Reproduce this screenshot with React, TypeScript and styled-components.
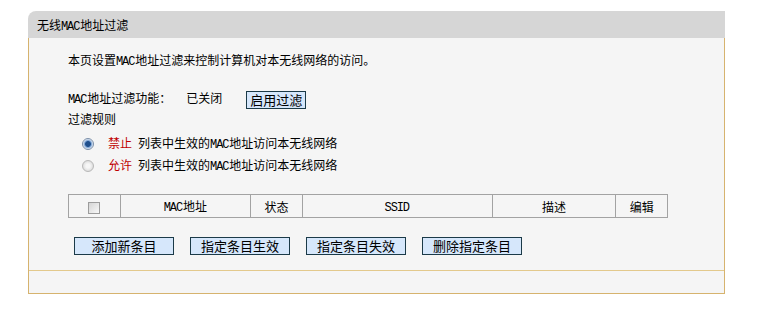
import React, { useState } from "react";
import styled, { createGlobalStyle } from "styled-components";

const GlobalStyle = createGlobalStyle`
  html, body {
    margin: 0;
    padding: 0;
    background: #ffffff;
  }
  body {
    font-family: "Noto Sans CJK SC", "Liberation Sans", sans-serif;
    font-size: 12px;
    color: #000;
  }
`;

const Page = styled.div`
  padding: 11px 0 0 28px;
  width: 697px;
`;

const Header = styled.div`
  height: 27px;
  line-height: 27px;
  padding-left: 9px;
  background: #d6d6d6;
  border-top-left-radius: 8px;
  white-space: nowrap;
`;

const Body = styled.div`
  background: #f5f5f5;
  border-left: 1px solid #d6b36e;
  border-right: 1px solid #d6b36e;
  border-bottom: 1px solid #d6b36e;
`;

const Content = styled.div`
  padding: 12px 0 15px 39px;
  border-bottom: 1px solid #e3c98c;
`;

const Footer = styled.div`
  height: 22px;
`;

const Latin = styled.span`
  font-family: "Liberation Mono", "DejaVu Sans Mono", monospace;
  font-size: 12px;
  letter-spacing: -1.1px;
  margin-right: 1px;
`;

const Line = styled.div<{ $top?: number; $height?: number }>`
  height: ${(p) => p.$height ?? 20}px;
  line-height: ${(p) => p.$height ?? 20}px;
  margin-top: ${(p) => p.$top ?? 0}px;
  white-space: nowrap;
`;

const Status = styled.span`
  margin-left: 15px;
`;

const SmallButton = styled.button`
  margin-left: 24px;
  height: 18px;
  width: 60px;
  padding: 0;
  font-family: inherit;
  font-size: 13px;
  line-height: 16px;
  vertical-align: middle;
  background: #d6e7fb;
  border: 1px solid #1b3a48;
  color: #000;
`;

const RadioRow = styled(Line)`
  padding-left: 14px;
  height: 22px;
  line-height: 22px;
`;

const RadioDot = styled.span<{ $checked: boolean }>`
  display: inline-block;
  vertical-align: middle;
  width: 12px;
  height: 12px;
  border-radius: 50%;
  box-sizing: border-box;
  border: 1px solid ${(p) => (p.$checked ? "#7a8ea8" : "#b8b8b8")};
  background: ${(p) =>
    p.$checked
      ? "radial-gradient(circle, #1f4f8c 0 2.5px, #6f9ad0 3.2px, #e8eef6 5px)"
      : "radial-gradient(circle, #f6f6f6 0 2px, #dadada 5.5px)"};
  margin: -2px 14px 0 0;
  cursor: pointer;
`;

const Action = styled.span`
  color: #c00000;
  margin-right: 6px;
`;

const Table = styled.table`
  margin-top: 18px;
  border-collapse: collapse;
  width: 600px;
  background: #f5f5f5;
`;

const Th = styled.td<{ $w: number }>`
  width: ${(p) => p.$w}px;
  height: 22px;
  border: 1px solid #a3a3a3;
  text-align: center;
  padding: 0;
`;

const Check = styled.span`
  display: inline-block;
  width: 12px;
  height: 12px;
  box-sizing: border-box;
  border: 1px solid #9c9c9c;
  background: linear-gradient(135deg, #d4d4d4, #f8f8f8);
  vertical-align: middle;
`;

const Buttons = styled.div`
  display: flex;
  gap: 16px;
  margin-top: 19px;
  padding-left: 6px;
`;

const ActionButton = styled(SmallButton)`
  margin-left: 0;
  width: 100px;
`;

const columns: { w: number; label: React.ReactNode }[] = [
  { w: 51, label: <Check /> },
  { w: 131, label: <><Latin>MAC</Latin>地址</> },
  { w: 51, label: "状态" },
  { w: 191, label: <Latin>SSID</Latin> },
  { w: 124, label: "描述" },
  { w: 51, label: "编辑" },
];

const App = (): React.ReactElement => {
  const [mode, setMode] = useState<"deny" | "allow">("deny");

  return (
    <>
      <GlobalStyle />
      <Page>
        <Header>无线<Latin>MAC</Latin>地址过滤</Header>
        <Body>
          <Content>
            <Line>本页设置<Latin>MAC</Latin>地址过滤来控制计算机对本无线网络的访问。</Line>
            <Line $top={18}>
              <Latin>MAC</Latin>地址过滤功能：
              <Status>已关闭</Status>
              <SmallButton>启用过滤</SmallButton>
            </Line>
            <Line $top={1}>过滤规则</Line>
            <RadioRow $top={3}>
              <RadioDot $checked={mode === "deny"} onClick={() => setMode("deny")} />
              <Action>禁止</Action>
              列表中生效的<Latin>MAC</Latin>地址访问本无线网络
            </RadioRow>
            <RadioRow>
              <RadioDot $checked={mode === "allow"} onClick={() => setMode("allow")} />
              <Action>允许</Action>
              列表中生效的<Latin>MAC</Latin>地址访问本无线网络
            </RadioRow>
            <Table>
              <tbody>
                <tr>
                  {columns.map((c, i) => (
                    <Th key={i} $w={c.w}>{c.label}</Th>
                  ))}
                </tr>
              </tbody>
            </Table>
            <Buttons>
              <ActionButton>添加新条目</ActionButton>
              <ActionButton>指定条目生效</ActionButton>
              <ActionButton>指定条目失效</ActionButton>
              <ActionButton>删除指定条目</ActionButton>
            </Buttons>
          </Content>
          <Footer />
        </Body>
      </Page>
    </>
  );
};

export default App;
